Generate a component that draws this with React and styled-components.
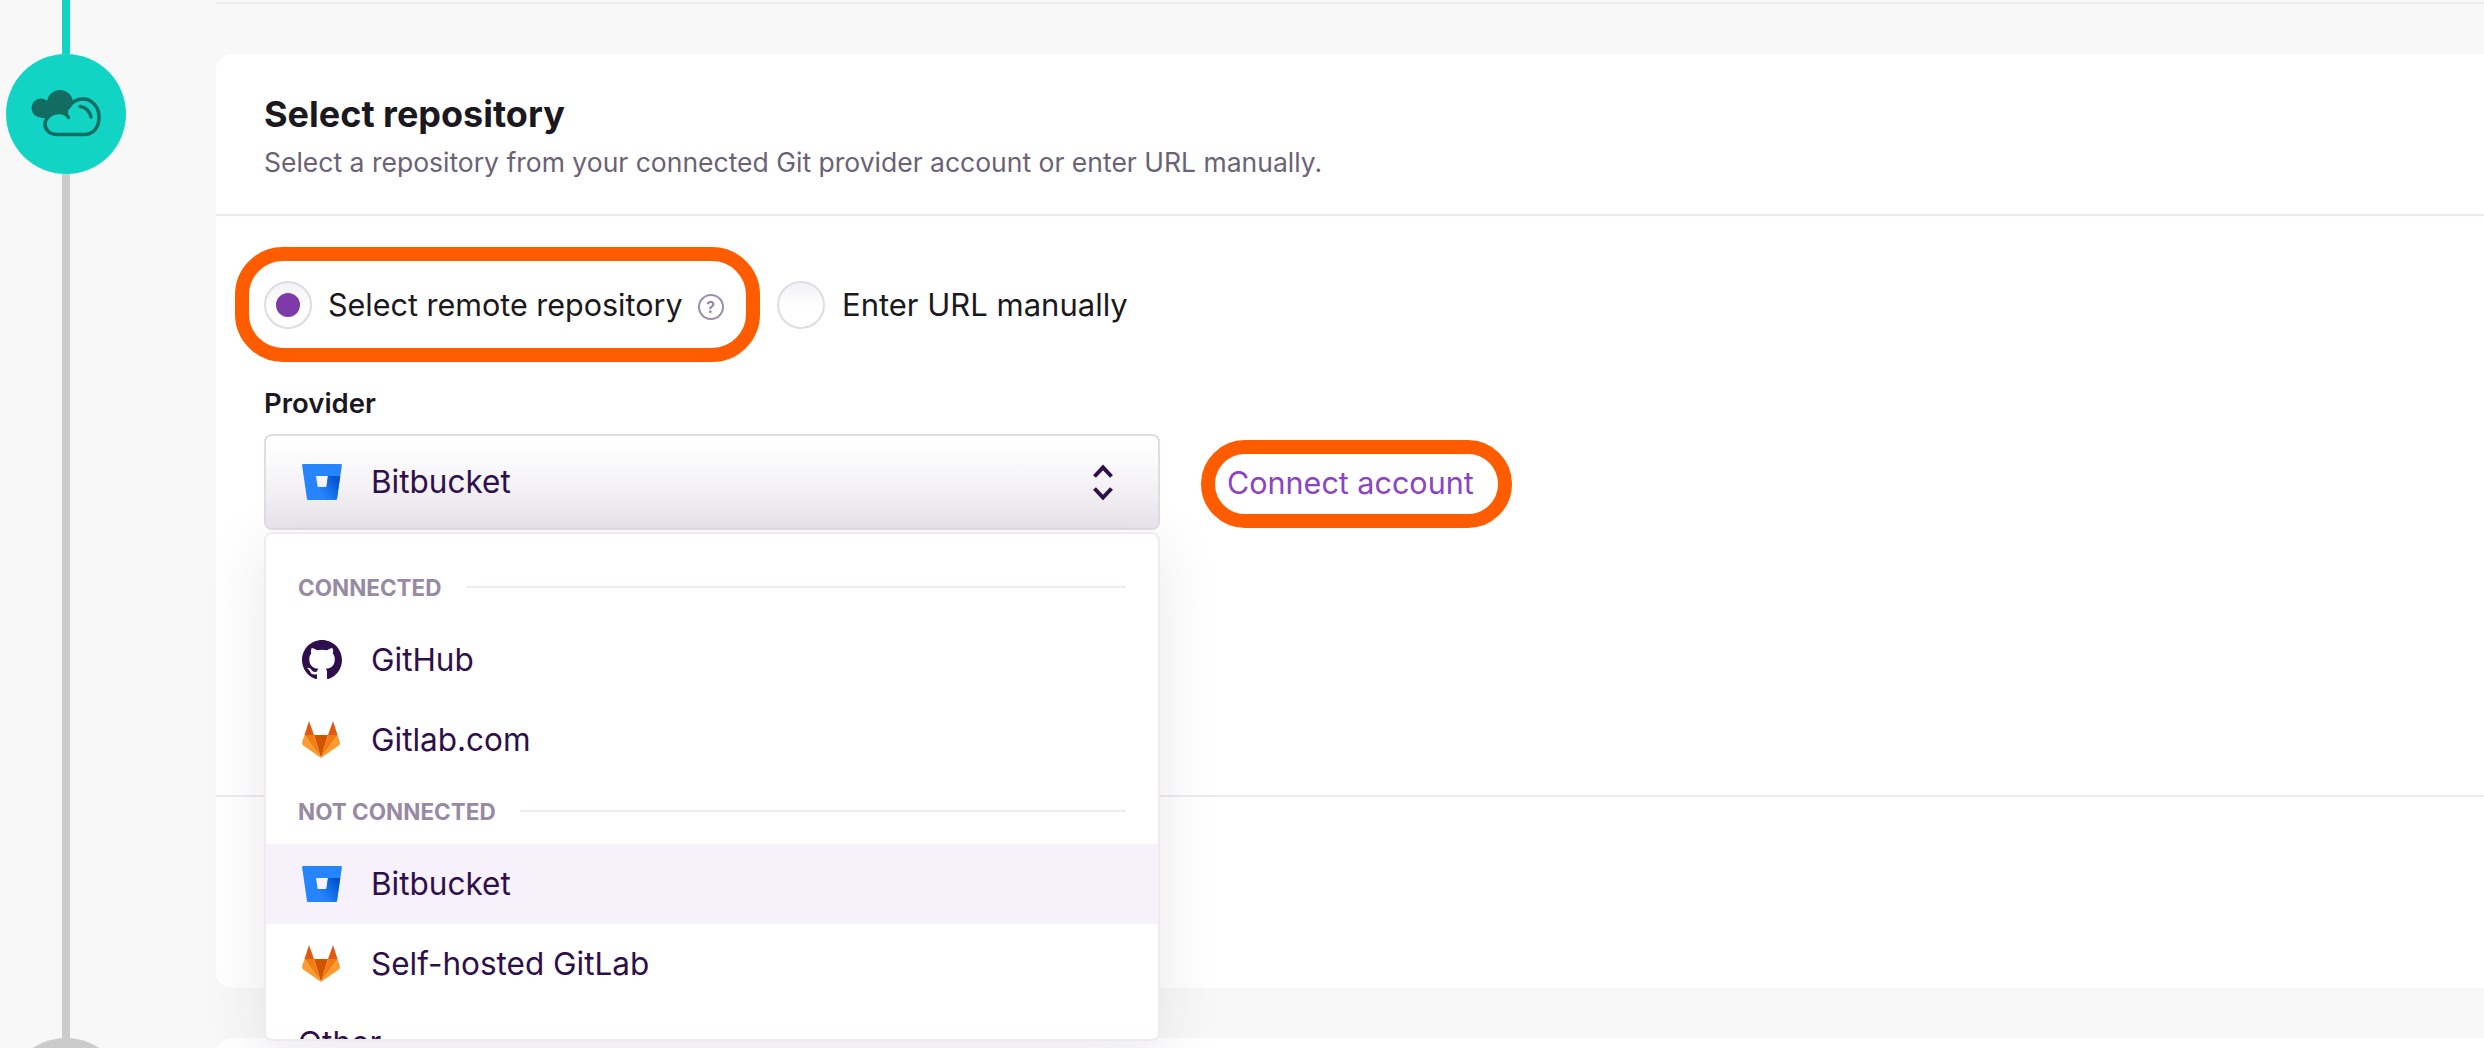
import React from 'react';
import styled, { createGlobalStyle } from 'styled-components';

const GlobalStyle = createGlobalStyle`
  html, body {
    margin: 0;
    padding: 0;
    height: 100%;
    background: #f8f8f8;
  }
  body {
    font-family: Inter, "Noto Sans", sans-serif;
    overflow: hidden;
  }
  * {
    box-sizing: border-box;
  }
`;

const BitbucketIcon = () => (
  <BrandIcon width="40" height="36" viewBox="0 0 40 36">
    <defs>
      <linearGradient id="bb-shade" x1="40" y1="13" x2="19" y2="29" gradientUnits="userSpaceOnUse">
        <stop offset="0.15" stopColor="#0052cc" />
        <stop offset="1" stopColor="#2684ff" />
      </linearGradient>
    </defs>
    <path
      fillRule="evenodd"
      fill="#2684ff"
      d="M1.2 0h37.6c.7 0 1.2.6 1.1 1.3L35 34.8c-.1.7-.7 1.2-1.4 1.2H6.3c-.7 0-1.2-.4-1.3-1.1L.1 1.3C0 .6.5 0 1.2 0zM14 12l1.7 11h8.7L26 12z"
    />
    <path fill="url(#bb-shade)" d="M38.2 12H26l-1.6 11h-8.7L5.4 35.2c.3.5.6.8 1 .8h27.2c.7 0 1.3-.5 1.4-1.2z" />
  </BrandIcon>
);

const GithubIcon = () => (
  <BrandIcon width="40" height="40" viewBox="0 0 16 16">
    <path
      fill="#2e0f4b"
      d="M8 0C3.58 0 0 3.58 0 8c0 3.54 2.29 6.53 5.47 7.59.4.07.55-.17.55-.38 0-.19-.01-.82-.01-1.49-2.01.37-2.53-.49-2.69-.94-.09-.23-.48-.94-.82-1.13-.28-.15-.68-.52-.01-.53.63-.01 1.08.58 1.23.82.72 1.21 1.87.87 2.33.66.07-.52.28-.87.51-1.07-1.78-.2-3.64-.89-3.64-3.95 0-.87.31-1.59.82-2.15-.08-.2-.36-1.02.08-2.12 0 0 .67-.21 2.2.82.64-.18 1.32-.27 2-.27.68 0 1.36.09 2 .27 1.53-1.04 2.2-.82 2.2-.82.44 1.1.16 1.92.08 2.12.51.56.82 1.27.82 2.15 0 3.07-1.87 3.75-3.65 3.95.29.25.54.73.54 1.48 0 1.07-.01 1.93-.01 2.2 0 .21.15.46.55.38A8.013 8.013 0 0016 8c0-4.42-3.58-8-8-8z"
    />
  </BrandIcon>
);

const GitlabIcon = () => (
  <BrandIcon width="40" height="38" viewBox="1 0 40 38">
    <polygon fill="#e0590f" points="8,0 3.5,14 13,14" />
    <polygon fill="#e0590f" points="32,0 27,14 36.5,14" />
    <polygon fill="#cf5500" points="13,14 27,14 20,37" />
    <polygon fill="#f47b10" points="3.5,14 13,14 20,37" />
    <polygon fill="#f47b10" points="27,14 36.5,14 20,37" />
    <polygon fill="#fb9a2e" points="3.5,14 1,21.5 1.6,24 20,37" />
    <polygon fill="#fb9a2e" points="36.5,14 39,21.5 38.4,24 20,37" />
  </BrandIcon>
);

const CloudIcon = () => (
  <svg width="72" height="50" viewBox="0 0 72 50">
    <circle cx="11" cy="19" r="9.5" fill="#126c62" />
    <circle cx="30" cy="14" r="13" fill="#126c62" />
    <rect x="11" y="14" width="27" height="15" fill="#126c62" />
    <path
      d="M38.500 28.500C36.500 25 33 23.500 29.500 23.500 20 23.500 15 30 15 35c0 6 5 10.500 12 10.500h27C63 45.500 69 39 69 28 69 17 61 10 53 10c-7 0-12 4-15 9"
      fill="#11d4c5"
      stroke="#126c62"
      strokeWidth="3.5"
      strokeLinecap="round"
    />
    <path d="M50 17.500c5.500.5 10 4.800 11 10.500" fill="none" stroke="#126c62" strokeWidth="3.500" strokeLinecap="round" />
  </svg>
);

const SortIcon = () => (
  <svg width="22" height="36" viewBox="0 0 22 36">
    <path d="M2.500 12.500L11 3.500l8.500 9M2.500 24.500l8.500 9 8.500-9" fill="none" stroke="#2e0f4b" strokeWidth="4" />
  </svg>
);

const App = () => (
  <>
    <GlobalStyle />
    <Page>
      <Rail>
        <RailLine active />
        <StepCircle active>
          <CloudIcon />
        </StepCircle>
        <RailLine />
        <StepCircle />
      </Rail>
      <Main>
        <PreviousCard />
        <Card>
          <CardHeader>
            <Title>Select repository</Title>
            <Subtitle>Select a repository from your connected Git provider account or enter URL manually.</Subtitle>
          </CardHeader>
          <CardBody>
            <RadioRow>
              <Highlight>
                <RadioOption>
                  <Radio checked />
                  <RadioText>Select remote repository</RadioText>
                  <HelpBadge>?</HelpBadge>
                </RadioOption>
              </Highlight>
              <RadioOption>
                <Radio />
                <RadioText wide>Enter URL manually</RadioText>
              </RadioOption>
            </RadioRow>
            <FieldLabel>Provider</FieldLabel>
            <FieldRow>
              <SelectWrap>
                <SelectTrigger>
                  <BitbucketIcon />
                  <OptionName>Bitbucket</OptionName>
                  <SortSlot>
                    <SortIcon />
                  </SortSlot>
                </SelectTrigger>
                <Menu>
                  <GroupHeading first>
                    <GroupName>CONNECTED</GroupName>
                    <GroupRule />
                  </GroupHeading>
                  <MenuItem>
                    <GithubIcon />
                    <OptionName>GitHub</OptionName>
                  </MenuItem>
                  <MenuItem>
                    <GitlabIcon />
                    <OptionName>Gitlab.com</OptionName>
                  </MenuItem>
                  <GroupHeading>
                    <GroupName>NOT CONNECTED</GroupName>
                    <GroupRule />
                  </GroupHeading>
                  <MenuItem hovered>
                    <BitbucketIcon />
                    <OptionName>Bitbucket</OptionName>
                  </MenuItem>
                  <MenuItem>
                    <GitlabIcon />
                    <OptionName>Self-hosted GitLab</OptionName>
                  </MenuItem>
                  <MenuItem plain>
                    <OptionName plain>Other</OptionName>
                  </MenuItem>
                </Menu>
              </SelectWrap>
              <ConnectHighlight>
                <ConnectLink>Connect account</ConnectLink>
              </ConnectHighlight>
            </FieldRow>
          </CardBody>
          <CardFooter />
        </Card>
        <NextCard />
      </Main>
    </Page>
  </>
);

export default App;

/* Layout */

const Page = styled.div`
  display: flex;
  height: 1048px;
  overflow: hidden;
  background: #f8f8f8;
`;

const Rail = styled.div`
  display: flex;
  flex-direction: column;
  align-items: center;
  flex: 0 0 120px;
  margin: 0 90px 0 6px;
`;

const RailLine = styled.div`
  width: 8px;
  flex: ${props => (props.active ? '0 0 54px' : '0 0 864px')};
  background: ${props => (props.active ? '#11d4c5' : '#cbcbcb')};
`;

const StepCircle = styled.div`
  display: flex;
  align-items: center;
  justify-content: center;
  flex: 0 0 120px;
  width: 120px;
  border-radius: 50%;
  background: ${props => (props.active ? '#11d4c5' : '#cbcbcb')};
`;

const Main = styled.div`
  flex: 1;
  display: flex;
  flex-direction: column;
`;

const PreviousCard = styled.div`
  flex: 0 0 54px;
  border-top: 2px solid transparent;
  background: linear-gradient(#f0eaee, #f0eaee) 0 0 / 100% 2px no-repeat;
`;

const Card = styled.section`
  flex: 0 0 934px;
  display: flex;
  flex-direction: column;
  background: #fff;
  border-radius: 16px 0 0 16px;
`;

const NextCard = styled.div`
  margin-top: 50px;
  flex: 0 0 120px;
  background: #fff;
  border-radius: 16px 0 0 0;
`;

const CardHeader = styled.header`
  flex: 0 0 162px;
  padding: 40px 48px 0;
  border-bottom: 2px solid #f0eaee;
`;

const Title = styled.h2`
  margin: 0;
  font-size: 36px;
  line-height: 40px;
  font-weight: 700;
  color: #1b1820;
`;

const Subtitle = styled.p`
  margin: 12px 0 0;
  font-size: 26.5px;
  line-height: 32px;
  color: #6b6275;
`;

const CardBody = styled.div`
  flex: 0 0 581px;
  padding: 31px 48px 0;
  border-bottom: 2px solid #f0eaee;
`;

const CardFooter = styled.div`
  flex: 1;
`;

/* Radios */

const RadioRow = styled.div`
  display: flex;
  align-items: center;
  gap: 17px;
  margin-left: -29px;
`;

const Highlight = styled.div`
  display: flex;
  align-items: center;
  width: 525px;
  height: 115px;
  padding-left: 15px;
  border: 14px solid #ff5c00;
  border-radius: 48px;
`;

const RadioOption = styled.label`
  display: flex;
  align-items: center;
`;

const Radio = styled.span`
  display: flex;
  align-items: center;
  justify-content: center;
  width: 48px;
  height: 48px;
  border-radius: 50%;
  border: 2px solid #e0dbe4;
  background: linear-gradient(#f3f1f4, #fff 55%);

  &::after {
    content: '';
    display: ${props => (props.checked ? 'block' : 'none')};
    width: 24px;
    height: 24px;
    border-radius: 50%;
    background: #7d3aa8;
  }
`;

const RadioText = styled.span`
  margin-left: ${props => (props.wide ? '17px' : '16px')};
  font-size: ${props => (props.wide ? '31px' : '30.5px')};
  line-height: 36px;
  font-weight: 400;
  color: #1b1820;
`;

const HelpBadge = styled.span`
  display: flex;
  align-items: center;
  justify-content: center;
  width: 26px;
  height: 26px;
  margin: 4px 0 0 15px;
  border-radius: 50%;
  border: 2.5px solid #9a8fa8;
  font-size: 16px;
  font-weight: 600;
  color: #8d8199;
`;

/* Provider field */

const FieldLabel = styled.div`
  margin-top: 25px;
  font-size: 27.5px;
  line-height: 32px;
  font-weight: 600;
  color: #1b1820;
`;

const FieldRow = styled.div`
  display: flex;
  align-items: center;
  gap: 41px;
  margin-top: 15px;
`;

const SelectWrap = styled.div`
  position: relative;
  width: 896px;
`;

const SelectTrigger = styled.div`
  display: flex;
  align-items: center;
  height: 96px;
  padding: 0 44px 0 36px;
  border: 2px solid #e0dbe4;
  border-radius: 8px;
  background: linear-gradient(#fff 8%, #e9e5eb);
`;

const SortSlot = styled.span`
  display: flex;
  margin-left: auto;
`;

const BrandIcon = styled.svg`
  flex: none;
  display: block;
`;

const OptionName = styled.span`
  margin-left: ${props => (props.plain ? '0' : '29px')};
  font-size: 31.5px;
  line-height: 36px;
  color: #2e0f4b;
`;

const Menu = styled.div`
  position: absolute;
  top: 98px;
  left: 0;
  right: 0;
  height: 509px;
  overflow: hidden;
  background: #fff;
  border-radius: 8px;
  border: 2px solid #f0eaee;
  box-shadow: 0 16px 64px rgba(46, 15, 75, 0.1);
`;

const GroupHeading = styled.div`
  display: flex;
  align-items: center;
  gap: 24px;
  height: ${props => (props.first ? '86px' : '64px')};
  padding: ${props => (props.first ? '20px' : '0')} 32px ${props => (props.first ? '0' : '2px')};
`;

const GroupName = styled.span`
  font-size: 22.5px;
  font-weight: 700;
  color: #978aa3;
`;

const GroupRule = styled.span`
  flex: 1;
  height: 2px;
  background: #f0eaee;
`;

const MenuItem = styled.div`
  display: flex;
  align-items: center;
  height: 80px;
  padding: ${props => (props.plain ? '0 32px 3px' : '0 36px')};
  background: ${props => (props.hovered ? '#f7f1fc' : '#fff')};
`;

const ConnectHighlight = styled.div`
  display: flex;
  align-items: center;
  width: 311px;
  height: 88px;
  margin-top: 4px;
  padding: 0 0 3px 12px;
  border: 14px solid #ff5c00;
  border-radius: 44px;
`;

const ConnectLink = styled.a`
  font-size: 30.5px;
  line-height: 36px;
  font-weight: 400;
  color: #8a44c4;
`;
